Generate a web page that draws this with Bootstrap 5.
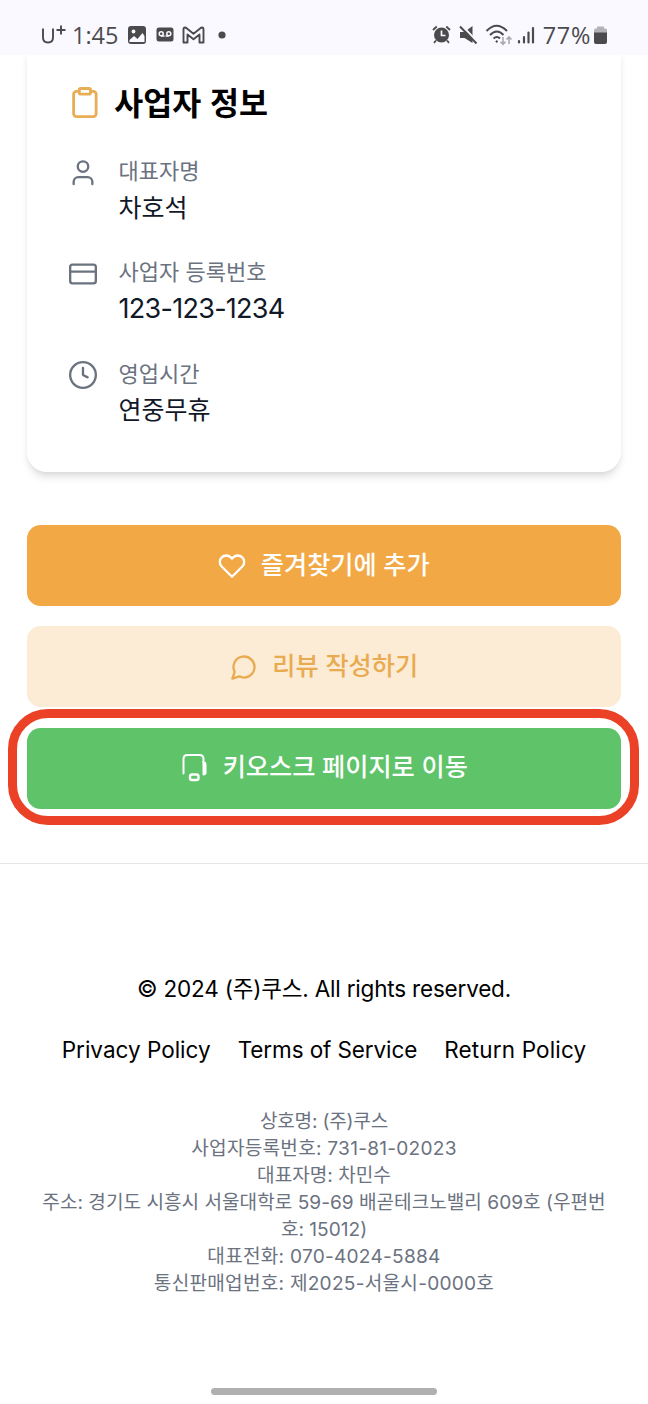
<!DOCTYPE html>
<html lang="ko">
<head>
<meta charset="utf-8">
<meta name="viewport" content="width=device-width, initial-scale=1">
<title>사업자 정보</title>
<link rel="stylesheet" href="https://cdn.jsdelivr.net/npm/bootstrap@5.3.0/dist/css/bootstrap.min.css">
<style>
body{font-family:Inter,"Noto Sans CJK KR",sans-serif;color:#000;background:#fff;overflow:hidden}
.screen{height:1404px;overflow:hidden}
.status{height:55px;background:#faf9ff;padding:14px 40px 0 42px;color:#4b4b4d;font:23.5px/40px "Open Sans",sans-serif;position:relative;z-index:2}
.status svg{display:block;flex:none}
.info-card{margin:-16px 27px 0;height:432.6px;padding:39.5px 41px 0 41.5px;border-radius:20px;background:#fff;box-shadow:0 7px 10px -2px rgba(0,0,0,.11),0 3px 7px -3px rgba(0,0,0,.11)}
.ttl{font:700 31.5px/47px "Noto Sans CJK KR",sans-serif;margin:0 0 28.5px;gap:12.5px}
.ttl svg{margin-left:-.5px}
.ttl span{position:relative;top:-1px}
.entry{height:74.25px;margin-bottom:27px;gap:22px}
.entry svg{margin-top:4.5px}
.lbl{font-size:22px;line-height:33.75px;color:#6b7280}
.entry div.lbl{padding-top:1px;margin-bottom:-1px}
.val{font-size:25px;line-height:40.5px;color:#111827}
.val-num{font-size:27px;letter-spacing:-.72px}
.actions{margin:53.6px 27px 0;gap:20.25px}
.act{height:81px;border:0;border-radius:13.5px;font-size:25.2px;font-weight:500;gap:14.5px}
.act-fav,.act-fav:hover{background:#f2a844;color:#fff}
.act-review,.act-review:hover{background:#fcecd6;color:#e9ab50}
.act-kiosk,.act-kiosk:hover{background:#5ec369;color:#fff}
.ring{position:absolute;inset:-18.500px -17.500px -16.500px -19.500px;border:9.5px solid #eb4127;border-radius:40px;pointer-events:none}
.foot{margin-top:53.9px;border-top:1px solid #e5e5e5;padding-top:108.5px}
.foot p,.foot-links{font-size:22.5px;line-height:34px}
.foot p{margin-bottom:27px;letter-spacing:-.19px}
.foot-links a{color:#000;text-decoration:none}
.foot-links{gap:27px}
.company{margin:40.5px 30px 0;font-size:19.1px;line-height:27px;color:#6b7280}
.company .wide{letter-spacing:.25px}
.homebar{position:absolute;left:211px;top:1388px;width:226px;height:7px;border-radius:4px;background:#b0b0b0}
.ln{fill:none;stroke:currentColor;stroke-width:2;stroke-linecap:round;stroke-linejoin:round;flex:none}
</style>
</head>
<body>
<div class="screen position-relative">
  <header class="status d-flex align-items-center justify-content-between">
    <div class="d-flex align-items-center">
      <svg width="25" height="40" viewBox="0 0 25 40" fill="none" stroke="#4b4b4d" stroke-width="1.900"><path d="M1 13.500v9q0 5 5 5t5-5v-9M19 10.500v9M14.500 15h9"/></svg>
      <span style="margin-left:5px">1:45</span>
      <svg style="margin-left:9px" width="20" height="20" viewBox="0 0 20 20"><rect x="1" y="1" width="18" height="18" rx="3" fill="#4b4b4d"/><circle cx="6.500" cy="6.500" r="1.900" fill="#faf9ff"/><path d="M2.500 15l4.500-4 3.500 3 5-6 2 3v6H2.500z" fill="#faf9ff"/></svg>
      <svg style="margin-left:9px" width="18" height="15" viewBox="0 0 18 15"><rect x=".5" y=".5" width="17" height="14" rx="2.500" fill="#4b4b4d"/><g fill="none" stroke="#faf9ff" stroke-width="1.500"><circle cx="5.200" cy="6.700" r="2"/><circle cx="12.800" cy="6.700" r="2"/><path d="M5 9h3.500M12.800 9H9.500"/></g></svg>
      <svg style="margin-left:8px" width="23" height="18" viewBox="0 0 23 18" fill="none" stroke="#4b4b4d" stroke-width="1.900" stroke-linejoin="round"><path d="M1.500 16.500V3q0-1.500 1.500-1.500l1 .2 7.500 6 7.500-6 1-.2q1.500 0 1.500 1.500v13.500h-4V8.500l-6 4.800-6-4.800v8z"/></svg>
      <svg style="margin-left:13px" width="8" height="8" viewBox="0 0 8 8"><circle cx="4" cy="4" r="3.600" fill="#4b4b4d"/></svg>
    </div>
    <div class="d-flex align-items-center">
      <svg width="19" height="19" viewBox="0 0 19 19"><circle cx="9.500" cy="10" r="7.500" fill="#4b4b4d"/><path d="M1 5l3.700-3.500M18 5l-3.700-3.500M4 15.500l-2 2.300M15 15.500l2 2.300" stroke="#4b4b4d" stroke-width="1.800"/><path d="M9.500 5.500v5h4" fill="none" stroke="#faf9ff" stroke-width="1.700"/></svg>
      <svg style="margin-left:8px" width="19" height="20" viewBox="0 0 19 20"><path d="M1 7h4.500l8-6v17l-8-5H1z" fill="#4b4b4d"/><path d="M2.500 0l16 17" stroke="#faf9ff" stroke-width="2"/><path d="M1 1.500l16.500 17" stroke="#4b4b4d" stroke-width="2"/></svg>
      <svg style="margin-left:7px" width="28" height="22" viewBox="0 0 28 22" fill="none" stroke="#4b4b4d" stroke-width="2"><path d="M1.500 7q10-10.500 20.500 0M5 11q7-7 13.500 0M8.500 14.500q3.500-3 6.500 0"/><circle cx="11.700" cy="17.500" r=".8" fill="#4b4b4d" stroke-width="1"/><path d="M18 13v7M15.500 17.700L18 20.300l2.500-2.600M24 20v-7M21.500 15.500L24 12.900l2.500 2.600" stroke="#aaa9af" stroke-width="1.600"/></svg>
      <svg style="margin-left:4px" width="18" height="18" viewBox="0 0 18 18" stroke="#4b4b4d" stroke-width="2.200" stroke-linecap="round"><path d="M2 15v1.500M7 11v5.500M11.500 6.500v10M16 2v14.500"/></svg>
      <span style="margin-left:7.500px;letter-spacing:.65px">77%</span>
      <svg style="margin-left:2px" width="15" height="20" viewBox="0 0 15 20"><path d="M4 3.500V1.500h7v2h1.500q1.500 0 1.500 1.500v4H1V5q0-1.500 1.500-1.500z" fill="#b3b3b7"/><path d="M1 7.500h13V17q0 2-2 2H3q-2 0-2-2z" fill="#4b4b4d"/></svg>
    </div>
  </header>

  <section class="info-card">
    <h2 class="ttl d-flex align-items-center">
      <svg class="ln" style="color:#e8ad55" width="33.750" height="33.750" viewBox="0 0 24 24"><rect width="8" height="4" x="8" y="2.500" rx="1"/><path d="M16 4.500h2a2 2 0 0 1 2 2v14a2 2 0 0 1-2 2H6a2 2 0 0 1-2-2v-14a2 2 0 0 1 2-2h2"/></svg>
      <span>사업자 정보</span>
    </h2>
    <div class="entry d-flex">
      <svg class="ln lbl" width="28" height="28" viewBox="0 0 24 24"><path d="M20 21.500v-2a4 4 0 0 0-4-4H8a4 4 0 0 0-4 4v2"/><circle cx="12" cy="6.500" r="4.500"/></svg>
      <div><div class="lbl">대표자명</div><div class="val">차호석</div></div>
    </div>
    <div class="entry d-flex">
      <svg class="ln lbl" width="28" height="28" viewBox="0 0 24 24"><rect width="22" height="16" x="1" y="4" rx="2"/><path d="M1 10h22"/></svg>
      <div><div class="lbl">사업자 등록번호</div><div class="val val-num">123-123-1234</div></div>
    </div>
    <div class="entry d-flex">
      <svg class="ln lbl" width="28" height="28" viewBox="0 0 24 24"><circle cx="12" cy="12" r="11"/><path d="M12 6v6l4 2"/></svg>
      <div><div class="lbl">영업시간</div><div class="val">연중무휴</div></div>
    </div>
  </section>

  <div class="actions d-flex flex-column">
    <button class="btn act act-fav d-flex align-items-center justify-content-center"><svg class="ln" width="28" height="28" viewBox="0 0 24 24"><path d="M20.840 4.610a5.500 5.500 0 0 0-7.780 0L12 5.670l-1.060-1.060a5.500 5.500 0 0 0-7.780 7.780L12 21.230l8.840-8.840a5.500 5.500 0 0 0 0-7.780z"/></svg><span>즐겨찾기에 추가</span></button>
    <button class="btn act act-review d-flex align-items-center justify-content-center"><svg class="ln" width="28" height="28" viewBox="0 0 24 24"><path d="M7.900 20A9 9 0 1 0 4 16.100L2 22Z"/></svg><span>리뷰 작성하기</span></button>
    <div class="position-relative">
      <button class="btn act act-kiosk w-100 d-flex align-items-center justify-content-center"><svg class="ln" width="28" height="28" viewBox="0 0 28 28"><path d="M3.500 19.500V5q0-4 4-4h12q4 0 4 4v15.500M23 8q2.500 0 2.500 3v8.500l-1.500 1"/><rect x="10" y="20.500" width="8.500" height="5.500" rx="2" stroke-width="2.400"/></svg><span>키오스크 페이지로 이동</span></button>
      <div class="ring"></div>
    </div>
  </div>

  <footer class="foot text-center">
    <p>© 2024 (주)쿠스. All rights reserved.</p>
    <nav class="foot-links d-flex justify-content-center"><a href="#">Privacy Policy</a><a href="#" style="letter-spacing:-.1px">Terms of Service</a><a href="#" style="letter-spacing:.15px">Return Policy</a></nav>
    <div class="company">
      <div style="letter-spacing:-.2px">상호명: (주)쿠스</div>
      <div class="wide">사업자등록번호: 731-81-02023</div>
      <div>대표자명: 차민수</div>
      <div>주소: 경기도 시흥시 서울대학로 59-69 배곧테크노밸리 609호 (우편번<br>호: 15012)</div>
      <div class="wide">대표전화: 070-4024-5884</div>
      <div class="wide">통신판매업번호: 제2025-서울시-0000호</div>
    </div>
  </footer>
  <div class="homebar"></div>
</div>
<script src="https://cdn.jsdelivr.net/npm/bootstrap@5.3.0/dist/js/bootstrap.bundle.min.js"></script>
</body>
</html>
